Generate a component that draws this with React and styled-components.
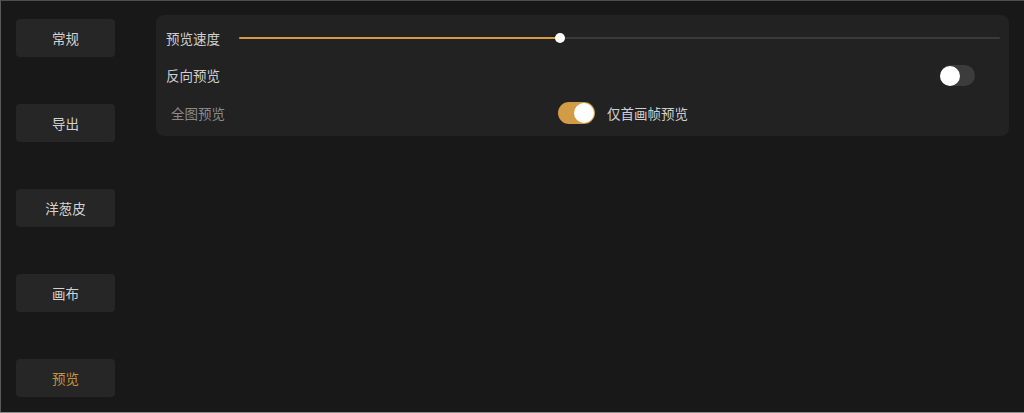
import React, { useState } from "react";
import styled, { createGlobalStyle } from "styled-components";

const GlobalStyle = createGlobalStyle`
  html, body {
    margin: 0;
    padding: 0;
    background: #181818;
  }
  body {
    font-family: "Noto Sans CJK SC", "Noto Sans", sans-serif;
  }
`;

const navItems = [
  { id: "general", title: "常规" },
  { id: "export", title: "导出" },
  { id: "onion", title: "洋葱皮" },
  { id: "canvas", title: "画布" },
  { id: "preview", title: "预览" },
];

const Toggle = ({ on, onClick }) => (
  <Switch $on={on} onClick={onClick}>
    <Knob $on={on} />
  </Switch>
);

const App = () => {
  const [active, setActive] = useState("preview");
  const [reverse, setReverse] = useState(false);
  const [firstOnly, setFirstOnly] = useState(true);
  const speed = 42.2;

  return (
    <Wrapper>
      <GlobalStyle />
      <Sidebar>
        {navItems.map((nav) => (
          <NavButton
            key={nav.id}
            $active={active === nav.id}
            onClick={() => setActive(nav.id)}
          >
            {nav.title}
          </NavButton>
        ))}
      </Sidebar>
      <Panel>
        <Row>
          <Label>预览速度</Label>
          <Slider>
            <Fill style={{ width: `${speed}%` }} />
            <Thumb style={{ left: `${speed}%` }} />
          </Slider>
        </Row>
        <Row>
          <Label>反向预览</Label>
          <Spacer />
          <ToggleSlot>
            <Toggle on={reverse} onClick={() => setReverse(!reverse)} />
          </ToggleSlot>
        </Row>
        <Row>
          <Label $muted>全图预览</Label>
          <Option>
            <Toggle on={firstOnly} onClick={() => setFirstOnly(!firstOnly)} />
            <OptionText>仅首画帧预览</OptionText>
          </Option>
        </Row>
      </Panel>
    </Wrapper>
  );
};

const Wrapper = styled.div`
  box-sizing: border-box;
  width: 1024px;
  height: 413px;
  display: flex;
  align-items: flex-start;
  gap: 41px;
  background: #181818;
  border-top: 1px solid #4e4e4e;
  border-left: 1px solid #5a5a5a;
  border-bottom: 1px solid #8c8c8c;
  padding: 14px 0 0 15px;
  overflow: hidden;
`;

const Sidebar = styled.nav`
  display: flex;
  flex-direction: column;
  gap: 47px;
  padding-top: 4px;
`;

const NavButton = styled.div`
  width: 99px;
  height: 38px;
  display: flex;
  align-items: center;
  justify-content: center;
  background: #262626;
  border-radius: 4px;
  font-size: 13.5px;
  color: ${(p) => (p.$active ? "#c9923d" : "#d2d2d2")};
  cursor: pointer;
`;

const Panel = styled.section`
  box-sizing: border-box;
  width: 853px;
  height: 121px;
  background: #222222;
  border-radius: 8px;
  padding: 4px 9px 0 10px;
  display: flex;
  flex-direction: column;
`;

const Row = styled.div`
  height: 37.5px;
  display: flex;
  align-items: center;
`;

const Label = styled.span`
  font-size: 13.5px;
  color: ${(p) => (p.$muted ? "#8a8a8a" : "#d0d0d0")};
  padding-left: ${(p) => (p.$muted ? "5px" : "0")};
  width: ${(p) => (p.$muted ? "387px" : "73px")};
  flex-shrink: 0;
`;

const Slider = styled.div`
  position: relative;
  flex: 1;
  height: 2px;
  background: #3a3a3a;
  border-radius: 1px;
`;

const Fill = styled.div`
  height: 100%;
  background: #d49b40;
  border-radius: 1px;
`;

const Thumb = styled.div`
  position: absolute;
  top: 50%;
  width: 10px;
  height: 10px;
  margin: -5px 0 0 -5px;
  background: #ffffff;
  border-radius: 50%;
`;

const Spacer = styled.div`
  flex: 1;
`;

const ToggleSlot = styled.div`
  margin-right: 25px;
  display: flex;
`;

const Switch = styled.div`
  position: relative;
  width: ${(p) => (p.$on ? "37px" : "35px")};
  height: ${(p) => (p.$on ? "22px" : "21px")};
  border-radius: 11px;
  background: ${(p) => (p.$on ? "#d29b45" : "#3c3c3c")};
  cursor: pointer;
  flex-shrink: 0;
`;

const Knob = styled.div`
  position: absolute;
  top: 1px;
  ${(p) => (p.$on ? "right: 1px;" : "left: 0;")}
  width: 20px;
  height: 20px;
  border-radius: 50%;
  background: #ffffff;
`;

const Option = styled.div`
  display: flex;
  align-items: center;
  gap: 12px;
`;

const OptionText = styled.span`
  font-size: 13.5px;
  color: #d0d0d0;
`;

export default App;
